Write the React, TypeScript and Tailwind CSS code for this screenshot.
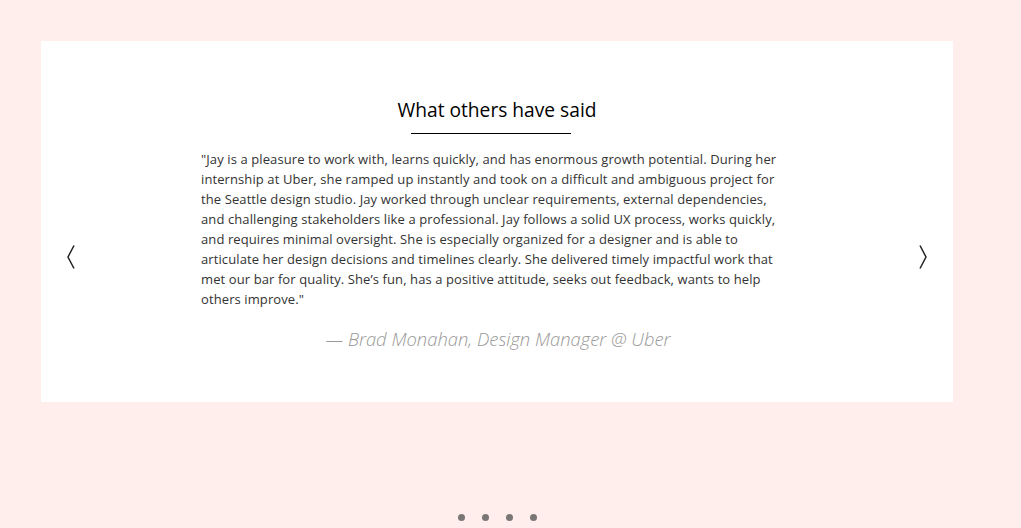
import React from 'react';

const lines = [
  '"Jay is a pleasure to work with, learns quickly, and has enormous growth potential. During her',
  'internship at Uber, she ramped up instantly and took on a difficult and ambiguous project for',
  'the Seattle design studio. Jay worked through unclear requirements, external dependencies,',
  'and challenging stakeholders like a professional. Jay follows a solid UX process, works quickly,',
  'and requires minimal oversight. She is especially organized for a designer and is able to',
  'articulate her design decisions and timelines clearly. She delivered timely impactful work that',
  'met our bar for quality. She\u2019s fun, has a positive attitude, seeks out feedback, wants to help',
  'others improve."',
];

const Chevron: React.FC<{ dir: 'left' | 'right' }> = ({ dir }) => (
  <svg width="12" height="26" viewBox="0 0 12 26" fill="none" stroke="#222" strokeWidth="1.5">
    {dir === 'left' ? <path d="M9 1.5 L3 13 L9 24.5" /> : <path d="M3 1.5 L9 13 L3 24.5" />}
  </svg>
);

export default function App() {
  return (
    <div className="w-[1021px] h-[528px] bg-[#ffeeeb] flex flex-col overflow-hidden font-['Open_Sans',sans-serif]">
      <div className="ml-[41px] mt-[41px] w-[912px] h-[361px] bg-white flex items-start">
        <button className="w-[60px] pt-[203px] flex justify-center pr-[1px]">
          <Chevron dir="left" />
        </button>
        <div className="flex-1 flex flex-col items-center pt-[57px]">
          <h2 className="text-[19.2px] leading-[24px] text-black">What others have said</h2>
          <div className="w-[160px] h-px bg-black mt-[11px] ml-[-13px]" />
          <p className="w-[592px] mt-[15px] text-[13px] leading-[20px] tracking-[0.1px] text-[#333] whitespace-nowrap">
            {lines.map((l, i) => (
              <span key={i} className="block">{l}</span>
            ))}
          </p>
          <p className="mt-[19px] ml-[2px] text-[18.4px] leading-[22px] italic font-light text-[#999]">
            — Brad Monahan, Design Manager @ Uber
          </p>
        </div>
        <button className="w-[60px] pt-[203px] flex justify-center pr-[1px]">
          <Chevron dir="right" />
        </button>
      </div>
      <div className="flex justify-center gap-[17px] mt-[112px] ml-[-26px]">
        {[0, 1, 2, 3].map((i) => (
          <span key={i} className="w-[7px] h-[7px] rounded-full bg-[#7b7676]" />
        ))}
      </div>
    </div>
  );
}
